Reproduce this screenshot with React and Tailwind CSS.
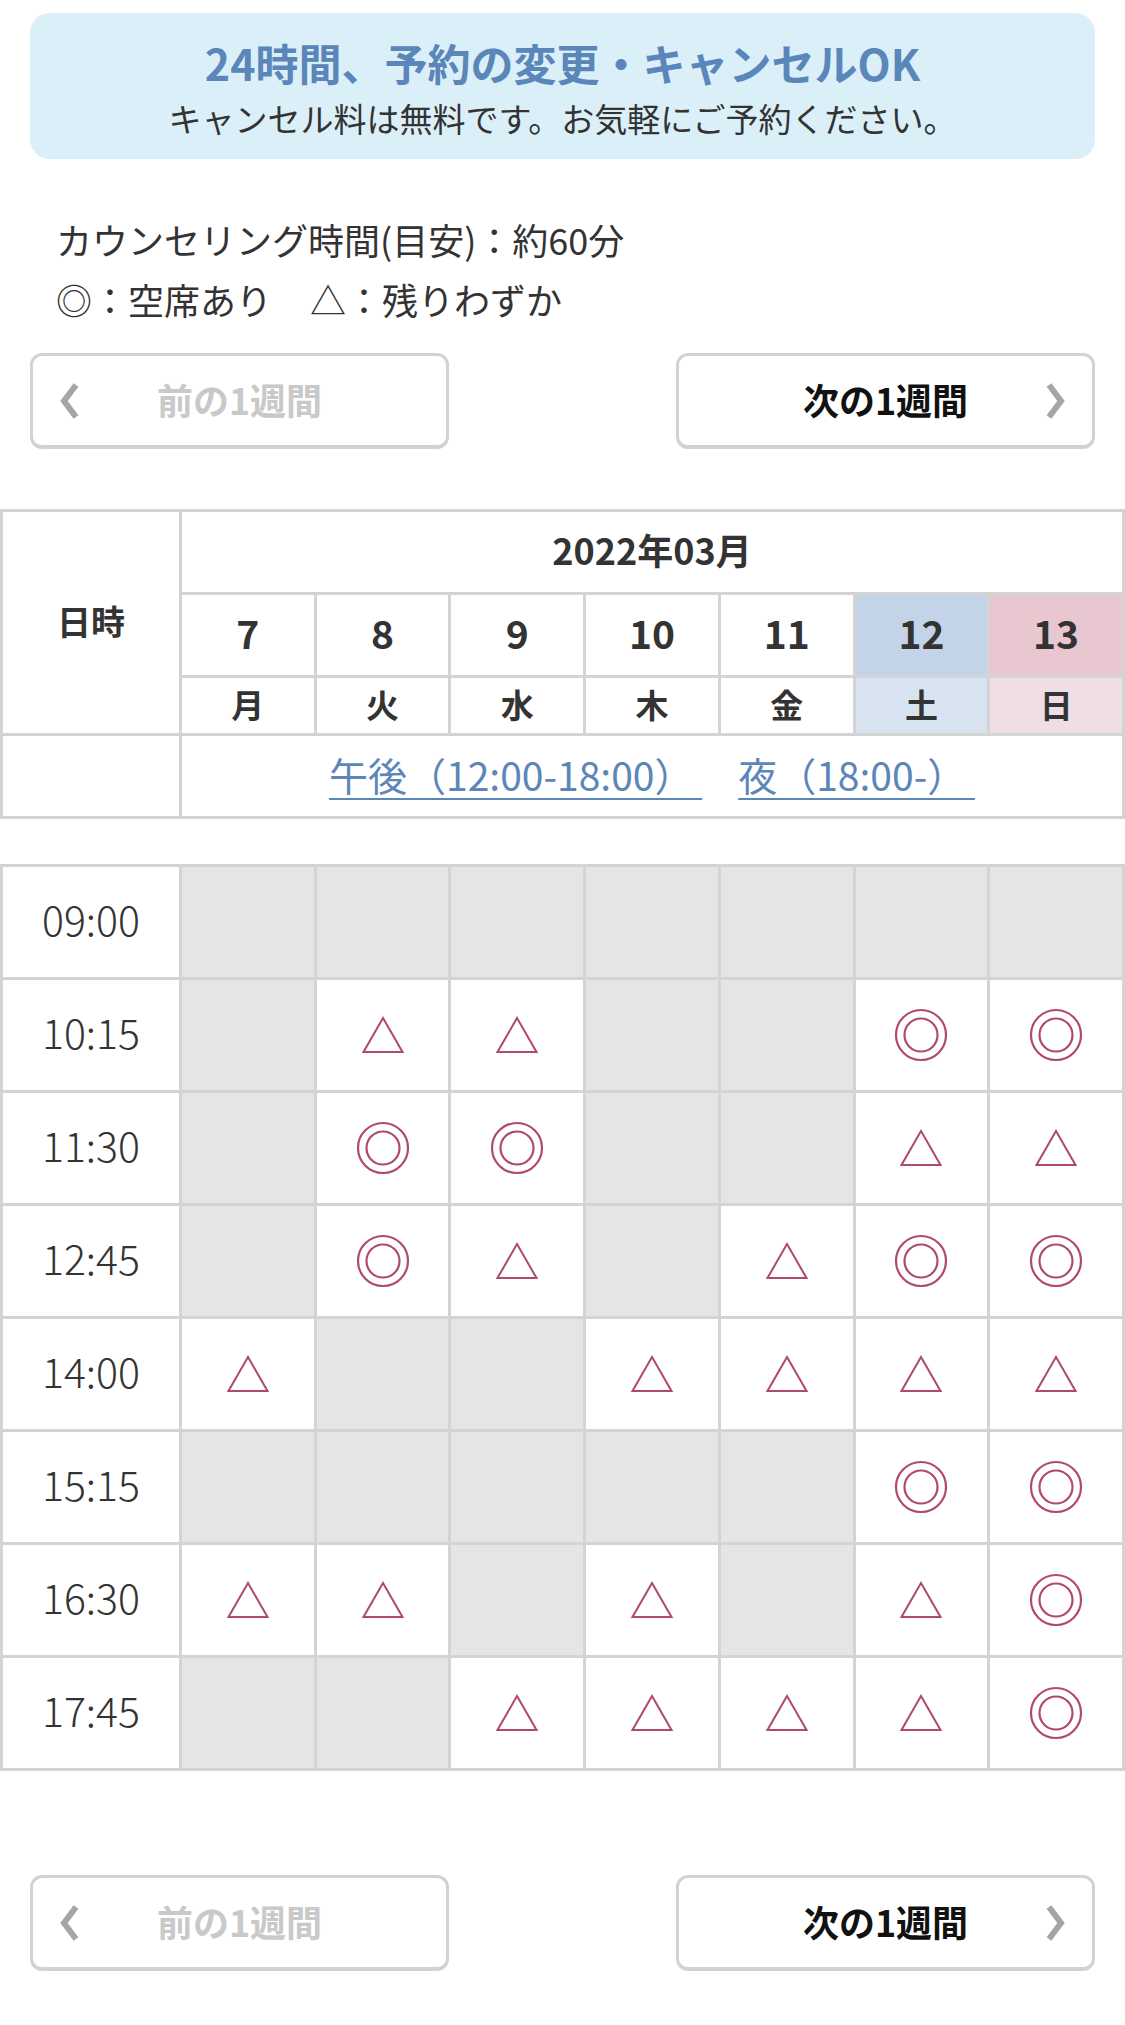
const X = 0, T = 1, O = 2;

const rows = [
  ["09:00", [X, X, X, X, X, X, X]],
  ["10:15", [X, T, T, X, X, O, O]],
  ["11:30", [X, O, O, X, X, T, T]],
  ["12:45", [X, O, T, X, T, O, O]],
  ["14:00", [T, X, X, T, T, T, T]],
  ["15:15", [X, X, X, X, X, O, O]],
  ["16:30", [T, T, X, T, X, T, O]],
  ["17:45", [X, X, T, T, T, T, O]],
];

const days = [
  { n: "7", w: "月", nb: "bg-white", wb: "bg-white" },
  { n: "8", w: "火", nb: "bg-white", wb: "bg-white" },
  { n: "9", w: "水", nb: "bg-white", wb: "bg-white" },
  { n: "10", w: "木", nb: "bg-white", wb: "bg-white" },
  { n: "11", w: "金", nb: "bg-white", wb: "bg-white" },
  { n: "12", w: "土", nb: "bg-[#c3d4e9]", wb: "bg-[#d7e3f0]" },
  { n: "13", w: "日", nb: "bg-[#e9c7d0]", wb: "bg-[#f0dee6]" },
];

const SYM = "#b04a6c";

function Tri() {
  return (
    <svg width="42" height="38" viewBox="0 0 42 38">
      <polygon points="21,2 40.5,36 1.5,36" fill="none" stroke={SYM} strokeWidth="2" strokeLinejoin="miter" />
    </svg>
  );
}

function Dbl() {
  return (
    <svg width="54" height="54" viewBox="0 0 54 54">
      <circle cx="27" cy="27" r="25" fill="none" stroke={SYM} strokeWidth="2.2" />
      <circle cx="27" cy="27" r="16.5" fill="none" stroke={SYM} strokeWidth="2.2" />
    </svg>
  );
}

function Chevron({ dir }) {
  const pts = dir === "left" ? "16,3 4,19 16,35" : "4,3 16,19 4,35";
  return (
    <svg width="20" height="38" viewBox="0 0 20 38">
      <polyline points={pts} fill="none" stroke="#a5a5a5" strokeWidth="6" strokeLinejoin="miter" strokeLinecap="butt" />
    </svg>
  );
}

function NavButtons() {
  return (
    <div className="flex justify-between px-[30px]">
      <div className="grid h-[96px] w-[419px] grid-cols-[74px_1fr_74px] items-center rounded-[12px] border-[3px] border-b-[4px] border-[#d2d2d2] bg-white pb-[4px]">
        <div className="flex justify-center pt-[4px]"><Chevron dir="left" /></div>
        <div className="text-center text-[36px] font-bold leading-none text-[#c9c9c9]">前の1週間</div>
        <div />
      </div>
      <div className="grid h-[96px] w-[419px] grid-cols-[74px_1fr_74px] items-center rounded-[12px] border-[3px] border-b-[4px] border-[#d2d2d2] bg-white pb-[4px]">
        <div />
        <div className="text-center text-[36px] font-bold leading-none text-[#111]">次の1週間</div>
        <div className="flex justify-center pt-[4px]"><Chevron dir="right" /></div>
      </div>
    </div>
  );
}

export default function App() {
  return (
    <div className="w-[1125px] min-h-[2025px] bg-white pt-[13px] font-['Noto_Sans_CJK_JP',sans-serif] text-[#333]">
      <div className="mx-[30px] flex h-[146px] flex-col items-center rounded-[20px] bg-[#daeff8] pt-[21px]">
        <div className="text-[43px] font-bold leading-[56px] text-[#5a86b9]">24時間、予約の変更・キャンセルOK</div>
        <div className="mt-[6px] text-[33px] leading-[44px] text-[#333]">キャンセル料は無料です。お気軽にご予約ください。</div>
      </div>

      <div className="mt-[50px] pl-[56px] text-[36px] leading-[60px] text-[#333]">
        <div>カウンセリング時間(目安)：約60分</div>
        <div className="flex">
          <span>◎：空席あり</span>
          <span className="ml-[38px]">△：残りわずか</span>
        </div>
      </div>

      <div className="mt-[24px]">
        <NavButtons />
      </div>

      <div className="mt-[60px] grid grid-cols-[176px_repeat(7,minmax(0,1fr))] grid-rows-[80px_80px_55px_80px] gap-[3px] border-[3px] border-[#d4d4d4] bg-[#d4d4d4]">
        <div className="row-span-3 flex items-center justify-center bg-white pb-[4px] text-[34px] font-bold">日時</div>
        <div className="col-span-7 flex items-center justify-center bg-white pb-[6px] text-[36px] font-bold">2022年03月</div>
        {days.map((d) => (
          <div key={"n" + d.n} className={`flex items-center justify-center ${d.nb} pb-[6px] text-[39px] font-semibold`}>{d.n}</div>
        ))}
        {days.map((d) => (
          <div key={"w" + d.n} className={`flex items-center justify-center ${d.wb} pb-[2px] text-[33px] font-bold`}>{d.w}</div>
        ))}
        <div className="bg-white" />
        <div className="col-span-7 flex items-center justify-center bg-white pb-[4px] text-[39px] leading-none text-[#5b86b8]">
          <a className="underline decoration-2 underline-offset-[7px]">午後（12:00-18:00）&nbsp;</a>
          <span className="w-[36px]" />
          <a className="underline decoration-2 underline-offset-[7px]">夜（18:00-）&nbsp;</a>
        </div>
      </div>

      <div className="mt-[45px] grid grid-cols-[176px_repeat(7,minmax(0,1fr))] auto-rows-[110px] gap-[3px] border-[3px] border-[#d4d4d4] bg-[#d4d4d4]">
        {rows.map(([time, cells]) => (
          <div key={time} className="contents">
            <div className="flex items-center justify-center bg-white pb-[6px] text-[41px] font-light text-[#333]">{time}</div>
            {cells.map((c, i) => (
              <div key={i} className={`flex items-center justify-center ${c === X ? "bg-[#e5e5e5]" : "bg-white"}`}>
                {c === T && <Tri />}
                {c === O && <Dbl />}
              </div>
            ))}
          </div>
        ))}
      </div>

      <div className="mt-[104px]">
        <NavButtons />
      </div>
    </div>
  );
}
